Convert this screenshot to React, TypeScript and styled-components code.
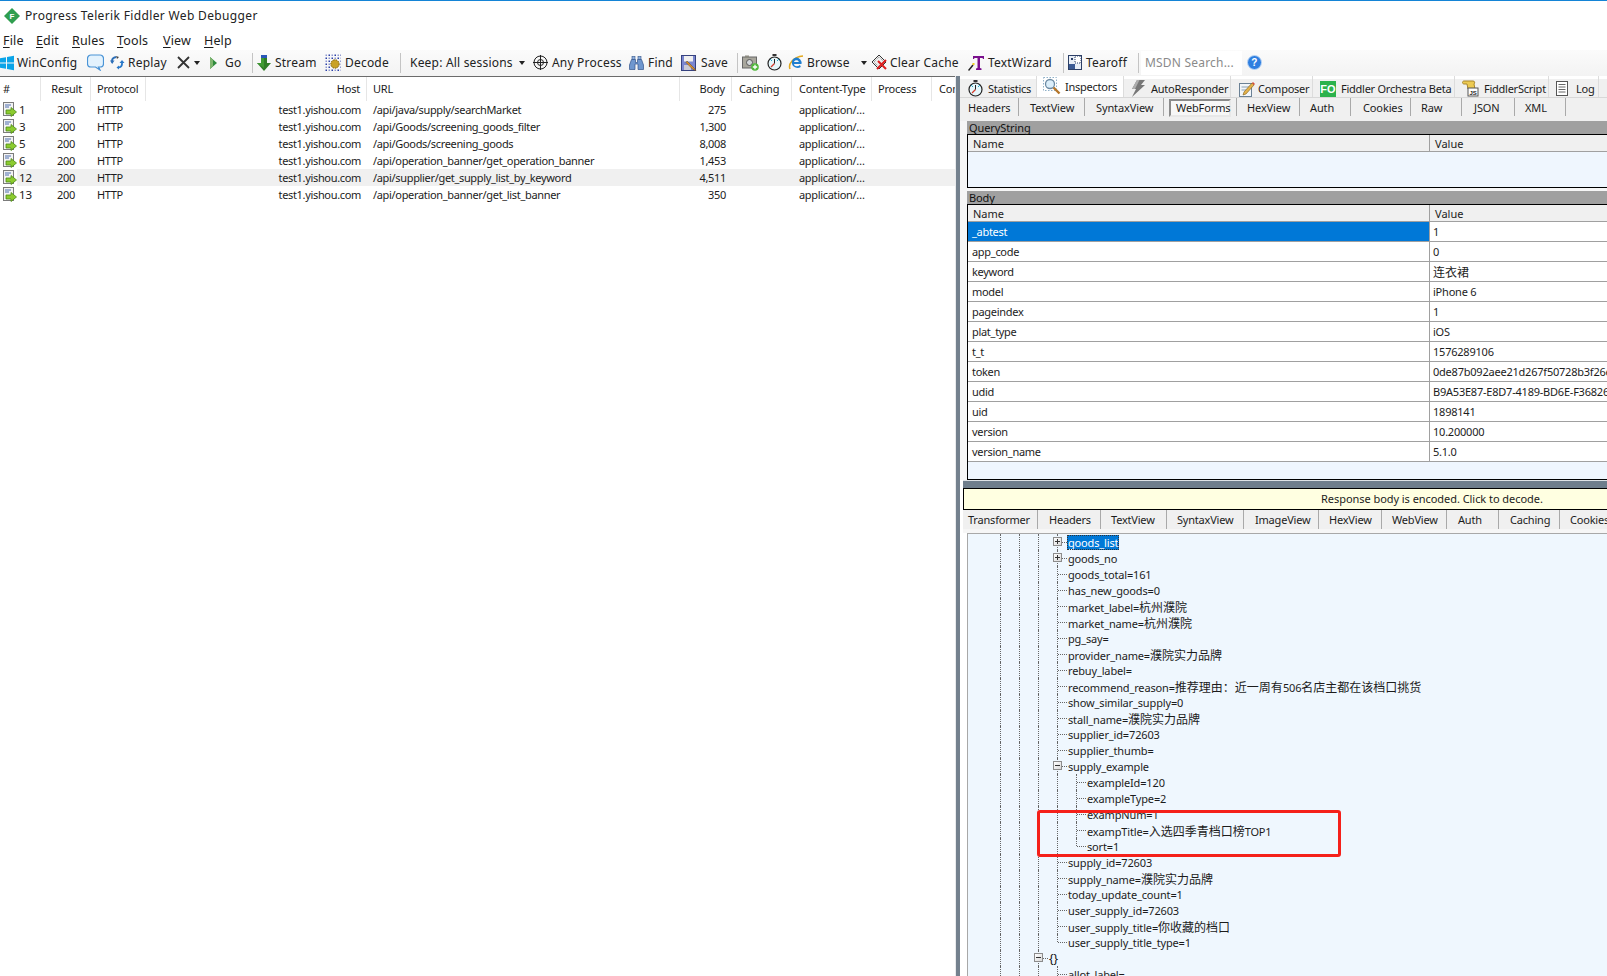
import React from 'react';
import styled, { createGlobalStyle } from 'styled-components';

const Global = createGlobalStyle`
  html, body { margin: 0; padding: 0; background: #fff; }
  body { font-family: "Noto Sans", "Noto Sans CJK SC", sans-serif; color: #1c1c1c; }
`;

const Page = styled.div`
  width: 1607px; height: 976px; overflow: hidden; display: flex; flex-direction: column;
  border-top: 1px solid #1484d6; box-sizing: border-box; background: #fff;
`;
const TitleBar = styled.div`
  height: 29px; flex: none; display: flex; align-items: center; padding: 0 0 0 4px; box-sizing: border-box;
  gap: 5px; font-size: 12px; letter-spacing: .35px; color: #222;
`;
const MenuBar = styled.div`height: 20px; flex: none; display: flex; align-items: center; padding: 1px 0 0 3px; box-sizing: border-box; font-size: 12.5px; letter-spacing: .15px;`;
const MenuItem = styled.span<{ $w: number }>`width: ${p => p.$w}px; flex: none; u { text-decoration: underline; text-underline-offset: 2px; }`;
const Toolbar = styled.div`
  height: 26px; flex: none; display: flex; align-items: center; box-sizing: border-box; padding-bottom: 1px;
  background: linear-gradient(#fbfbfb, #f3f3f3); font-size: 12px; letter-spacing: .2px; color: #222; white-space: nowrap;
`;
const ToolItem = styled.div<{ $w: number; $gap?: number }>`
  width: ${p => p.$w}px; flex: none; display: flex; align-items: center; gap: ${p => p.$gap ?? 4}px; svg { flex: none; }
`;
const ToolSep = styled.div<{ $w: number }>`
  width: ${p => p.$w}px; flex: none; height: 20px; box-sizing: border-box;
  &::before { content: ""; display: block; width: 1px; height: 20px; background: #c4c4c4; }
`;
const Search = styled.div`
  width: 101px; height: 24px; flex: none; background: #fff; color: #8a8a8a; display: flex; align-items: center; padding-left: 4px;
  box-sizing: border-box; margin-right: 5px;
`;
const Main = styled.div`flex: 1; min-height: 0; display: flex;`;

const SessionPane = styled.div`width: 955px; flex: none; overflow: hidden; font-size: 11px; letter-spacing: -.33px; border-top: 1px solid #6b6b6b;`;
const COLS = '41px 50px 55px 221px 313px 52px 60px 80px 60px 23px';
const HeadRow = styled.div`display: grid; grid-template-columns: ${COLS}; height: 24px; box-sizing: border-box; white-space: nowrap; letter-spacing: -.2px;`;
const HeadCell = styled.div<{ $r?: number; $l?: number }>`
  display: flex; align-items: center; justify-content: ${p => (p.$r !== undefined ? 'flex-end' : 'flex-start')};
  padding: 0 ${p => p.$r ?? 0}px 2px ${p => p.$l ?? 0}px; border-right: 1px solid #e6e6e6; box-sizing: border-box; overflow: hidden;
  &:last-child { border-right: 0; }
`;
const Row = styled.div<{ $sel?: boolean }>`
  display: grid; grid-template-columns: ${COLS}; height: 17px; white-space: nowrap;
  background: ${p => (p.$sel ? 'linear-gradient(90deg, #fff 17px, #f0f0f0 17px)' : 'transparent')};
`;
const Cell = styled.div<{ $r?: number; $l?: number }>`
  display: flex; align-items: center; justify-content: ${p => (p.$r !== undefined ? 'flex-end' : 'flex-start')};
  padding: 0 ${p => p.$r ?? 0}px 0 ${p => p.$l ?? 0}px; box-sizing: border-box; overflow: hidden;
`;
const IdCell = styled(Cell)`padding-left: 3px; gap: 2px; font-size: 11.5px; letter-spacing: 0;`;

const Splitter = styled.div`width: 5px; flex: none; background: linear-gradient(90deg, #e9eaec 1px, #74818e 1px);`;
const Inspect = styled.div`flex: 1; min-width: 0; display: flex; flex-direction: column; overflow: hidden;`;
const TopStrip = styled.div`height: 21px; flex: none; display: flex; padding: 0 0 0 1px; font-size: 11px; letter-spacing: -.25px; background: linear-gradient(#fff 3px, #f0f0f0 3px); border-bottom: 1px solid #d8d8d8; white-space: nowrap;`;
const TopTab = styled.div<{ $w: number; $active?: boolean; $pad: number; $gap: number }>`
  width: ${p => p.$w}px; flex: none; display: flex; align-items: center; box-sizing: border-box;
  padding: ${p => (p.$active ? '0 0 1px' : '4px 0 0')} ${p => p.$pad}px; gap: ${p => p.$gap}px;
  padding-right: 0; border-right: 1px solid #dcdcdc; overflow: hidden;
  background: ${p => (p.$active ? '#fff' : 'transparent')};
  svg { flex: none; }
`;
const SubStrip = styled.div<{ $h: number; $ls: number }>`
  height: ${p => p.$h}px; flex: none; display: flex; font-size: 11px; letter-spacing: ${p => p.$ls}px; background: #f0f0f0; white-space: nowrap;
`;
const SubTab = styled.div<{ $w: number; $pad: number; $boxed?: boolean; $h: number }>`
  width: ${p => p.$w}px; height: ${p => p.$h}px; flex: none; display: flex; align-items: center; box-sizing: border-box;
  padding-left: ${p => p.$pad}px; border-right: 1px solid #a9a9a9; position: relative;
  ${p => p.$boxed && `
    &::before { content: ""; position: absolute; left: 5px; right: 5px; top: 1px; bottom: -1px;
      border: 2px solid; border-color: #8a8a8a #e8e8e8 #e8e8e8 #8a8a8a; background: #f7f7f7; }
    & > span { position: relative; }
  `}
`;
const UpperBody = styled.div`flex: none; height: 359px; padding-left: 7px; background: #f6f6f6; font-size: 11px;`;
const GroupHead = styled.div`height: 13px; line-height: 13px; margin-right: -4px; background: #a0a0a0; padding-left: 2px; color: #111; letter-spacing: -.1px;`;
const Frame = styled.div<{ $h: number }>`
  height: ${p => p.$h}px; box-sizing: border-box; border: 1px solid #000; margin-right: -4px; background: #eff6fe; overflow: hidden;
`;
const GridHead = styled.div`display: grid; grid-template-columns: 462px 1fr; height: 16px; background: #f0f0f0; border-bottom: 1px solid #a0a0a0;`;
const HeadName = styled.div`padding-left: 5px; border-right: 1px solid #a0a0a0; line-height: 17px; &:last-child { border-right: 0; }`;
const FormRow = styled.div`display: grid; grid-template-columns: 462px 1fr; height: 20px; box-sizing: border-box; background: #fff; border-bottom: 1px solid #a0a0a0; white-space: nowrap;`;
const NameCell = styled.div<{ $sel?: boolean }>`
  display: flex; align-items: center; padding-left: 4px; border-right: 1px solid #a0a0a0; letter-spacing: -.3px;
  background: ${p => (p.$sel ? '#0078d7' : 'transparent')}; color: ${p => (p.$sel ? '#fff' : 'inherit')};
`;
const ValueCell = styled.div`display: flex; align-items: center; padding-left: 3px; overflow: hidden; letter-spacing: -.22px;`;
const FormGap = styled.div`height: 3px;`;
const HSplit = styled.div`height: 8px; flex: none; background: linear-gradient(#dfe3e6 1px, #6f7e8c 1px); margin-left: 3px;`;
const Lower = styled.div`flex: 1; min-height: 0; display: flex; flex-direction: column; padding-left: 3px; font-size: 11px;`;
const Notice = styled.div`
  height: 22px; flex: none; box-sizing: border-box; border: 1px solid #000; border-right: 0; background: #ffffe1;
  display: flex; align-items: center; padding: 0 0 2px 357px; letter-spacing: -.05px;
`;
const TreeGap = styled.div`height: 4px; flex: none; background: #f6f6f6;`;
const Tree = styled.div`
  flex: 1; min-height: 0; position: relative; margin-left: 4px; border: 1px solid #a8a8a8; border-right: 0; border-bottom: 0;
  background: #eff7fe; padding: 0 0 0 32px; overflow: hidden; white-space: nowrap; letter-spacing: -.15px;
`;
const TreeRow = styled.div`height: 16px; display: flex; align-items: center;`;
const Guide = styled.span`width: 19px; height: 16px; flex: none; box-sizing: border-box; border-left: 1px dotted #666;`;
const Branch = styled.span<{ $last?: boolean }>`
  width: 11px; height: 16px; flex: none; box-sizing: border-box; position: relative;
  &::before { content: ""; position: absolute; left: 0; top: 0; height: ${p => (p.$last ? 8 : 16)}px; border-left: 1px dotted #666; }
  &::after { content: ""; position: absolute; left: 1px; top: 8px; width: 9px; border-top: 1px dotted #666; }
`;
const Expander = styled.span`
  position: absolute; z-index: 1; left: -4px; top: 3px; width: 9px; height: 9px; box-sizing: border-box; border: 1px solid #8c8c8c;
  background: linear-gradient(135deg, #fff, #d9d9d9); display: block;
`;
const ExpBar = styled.span<{ $v?: boolean }>`
  position: absolute; background: #333;
  ${p => (p.$v ? 'left: 3px; top: 1px; width: 1px; height: 5px;' : 'left: 1px; top: 3px; width: 5px; height: 1px;')}
`;
const NodeText = styled.span<{ $sel?: boolean; $brace?: boolean }>`
  ${p => p.$sel && 'background: #0078d7; color: #fff; outline: 1px dotted #333; outline-offset: -1px; padding: 0 1px; margin-left: -1px;'}
  ${p => p.$brace && 'font-size: 12px; color: #111;'}
`;
const Cjk = styled.span`font-family: "Noto Sans CJK SC", sans-serif; font-size: 12px; letter-spacing: 0;`;
const RedBox = styled.div`
  position: absolute; left: 69px; top: 276px; width: 304px; height: 47px; box-sizing: border-box;
  border: 3px solid #f5201a; border-radius: 3px;
`;

const splitCjk = (s: string) =>
  s.split(/([\u3000-\u9fff\uff00-\uffef]+)/).map((t, i) =>
    i % 2 ? <Cjk key={i}>{t}</Cjk> : <React.Fragment key={i}>{t}</React.Fragment>);

/* ---------- icons ---------- */
const Logo = () => (
  <svg width="16" height="16" viewBox="0 0 16 16"><path d="M8 0l8 8-8 8-8-8z" fill="#2f9e4f" /><text x="8" y="11" fontSize="8" fontWeight="700" fontFamily="Liberation Sans" textAnchor="middle" fill="#fff">F</text></svg>
);
const Windows = () => (
  <svg width="14" height="16" viewBox="0 0 14 16"><path d="M0 3.200l6-1v5.300H0zM7 2l7-1.200v6.700H7zM0 8.500h6v5.300l-6-1zM7 8.500h7v6.700L7 14z" fill="#0aa4e8" /></svg>
);
const Bubble = () => (
  <svg width="17" height="17" viewBox="0 0 17 17"><path d="M4 1h9a3.500 3.500 0 013.500 3.500v5A3.500 3.500 0 0113 13h-1.500l1.500 3-4.500-3H4A3.500 3.500 0 01.5 9.500v-5A3.500 3.500 0 014 1z" fill="#e3f2fd" stroke="#4a94d6" strokeWidth="1.200" /></svg>
);
const Replay = () => (
  <svg width="15" height="15" viewBox="0 0 15 15" fill="none"><path d="M2 7.500V6c0-2 1.500-3.500 4-4" stroke="#2d6fb8" strokeWidth="1.800" /><path d="M0 5.500h4.500L2.200 9z" fill="#2d6fb8" /><path d="M6 1l3 1-2 2z" fill="#444" /><path d="M12 7.500V9c0 2-1 3-3 3.500" stroke="#2878c8" strokeWidth="1.800" /><path d="M9.500 8h5L12 5z" fill="#2878c8" /><path d="M9 10.500v4l-2.500-2z" fill="#2878c8" /></svg>
);
const Cross = () => (
  <svg width="13" height="13" viewBox="0 0 13 13"><path d="M1 1l11 11M12 1L1 12" stroke="#333" strokeWidth="1.800" /></svg>
);
const Caret = () => <svg width="6" height="4" viewBox="0 0 6 4"><path d="M0 0h6L3 4z" fill="#222" /></svg>;
const Play = () => (
  <svg width="7" height="12" viewBox="0 0 7 12"><path d="M0 0l7 6-7 6z" fill="#2f8a3c" /><path d="M0 0l3 3v6l-3 3z" fill="#7fb56e" /></svg>
);
const Stream = () => (
  <svg width="14" height="16" viewBox="0 0 14 16"><path d="M4 0h6v3H4z" fill="#2a57b8" /><path d="M4 3h6v5h4l-7 8-7-8h4z" fill="#2f7d26" /><path d="M4 3h3v10L0 8h4z" fill="#3f9b32" /></svg>
);
const Decode = () => {
  const dots: React.ReactNode[] = [];
  for (let y = 0; y < 6; y++) for (let x = 0; x < 6; x++)
    if (!(x > 1 && y > 1 && x < 5 && y < 5)) dots.push(<rect key={`${x}${y}`} x={x * 3 + .5} y={y * 3 + .5} width="1.500" height="1.500" fill={(x + y) % 2 ? '#2a3fa8' : '#8d97cf'} />);
  return <svg width="16" height="17" viewBox="0 0 16 17">{dots}<circle cx="10" cy="10" r="4.200" fill="#c9a227" stroke="#7a5f10" strokeDasharray="1.500 1" /></svg>;
};
const Cross3 = () => (
  <svg width="15" height="15" viewBox="0 0 15 15" fill="none" stroke="#222"><circle cx="7.500" cy="7.500" r="6.500" /><circle cx="7.500" cy="7.500" r="3" /><path d="M0 7.500h15M7.500 0v15" /></svg>
);
const Binoc = () => (
  <svg width="15" height="14" viewBox="0 0 15 14"><rect x="3" y="0.500" width="3" height="3" fill="#8fb0dc" stroke="#33558c" strokeWidth=".6" /><rect x="9" y="0.500" width="3" height="3" fill="#8fb0dc" stroke="#33558c" strokeWidth=".6" /><path d="M2.500 3.500h4v3h2v-3h4l2 5.500v4.500H9V8H6v5.500H.5V9z" fill="#6f97cf" stroke="#33558c" strokeWidth=".7" /></svg>
);
const Save = () => (
  <svg width="16" height="16" viewBox="0 0 16 16"><rect x=".5" y=".5" width="14" height="15" fill="#7a86cf" stroke="#36427f" /><rect x="3" y="1" width="9" height="5.500" fill="#f0f0f0" /><rect x="3" y="10" width="7" height="5" fill="#c9c9d6" /><path d="M6 6l7 7 2 2.500-3-1-7-7z" fill="#d88f2c" stroke="#6a4a18" strokeWidth=".5" /></svg>
);
const Camera = () => (
  <svg width="17" height="17" viewBox="0 0 17 17"><rect x=".5" y="3" width="14" height="11" fill="#a8a69c" stroke="#666" /><rect x="3" y="1.500" width="4" height="2" fill="#8c8a80" /><circle cx="7.500" cy="8.500" r="3" fill="#d3d7da" stroke="#555" /><circle cx="13" cy="13" r="3.800" fill="#4fb83a" /><path d="M13 10.800v4.400M10.800 13h4.400" stroke="#fff" strokeWidth="1.300" /></svg>
);
const Watch = () => (
  <svg width="15" height="17" viewBox="0 0 15 17"><rect x="5.500" y="0" width="4" height="2" fill="#333" /><circle cx="7.500" cy="9.500" r="6.500" fill="#e6f7fb" stroke="#222" strokeWidth="1.200" /><path d="M7.500 9.500L4 13" stroke="#d63a2a" strokeWidth="1.200" /><path d="M7.500 5v4.500" stroke="#222" /><path d="M3 5l2 2M12 5l-2 2" stroke="#2ba6c4" /></svg>
);
const IE = () => (
  <svg width="16" height="16" viewBox="0 0 16 16"><path d="M2 14C0 9 5 2 15 1" stroke="#e2a81e" strokeWidth="1.500" fill="none" /><path d="M8 2.500a5.500 5.500 0 015.500 6.500H6c.2 2.500 3.500 3 6 1L12.800 12a5.800 5.800 0 01-9-4.500A5.500 5.500 0 018 2.500zM6 7h4.800C10.500 4.500 6.500 4.500 6 7z" fill="#1f7fd1" fillRule="evenodd" /></svg>
);
const ClearCache = () => (
  <svg width="17" height="17" viewBox="0 0 17 17"><path d="M1 8l7-7 7 7-7 7z" fill="#eee" stroke="#333" /><path d="M3 8l5-5 5 5-5 5z" fill="none" stroke="#888" strokeDasharray="1 1" /><path d="M7 7l8 8M15 6l-9 9" stroke="#dd1f1f" strokeWidth="2" /></svg>
);
const Wizard = () => (
  <svg width="16" height="16" viewBox="0 0 16 16"><path d="M5 1h11v3h-1l-.5-1H12v10l1.500.5V15H8v-1.500L9.500 13V3H6.500L6 4H5z" fill="#7a0f8c" /><path d="M.5 15.500L5 10" stroke="#222" strokeWidth="1.500" /><rect x="4.500" y="8" width="2" height="2" fill="#f2d01e" /></svg>
);
const Tearoff = () => (
  <svg width="14" height="15" viewBox="0 0 14 15"><rect x=".5" y=".5" width="13" height="14" fill="#e8eef6" stroke="#2c3f66" /><path d="M7 1h6v7H7z" fill="#fff" stroke="#2c3f66" strokeDasharray="1 1" /><path d="M1 9h6v5H1z" fill="#3a5a94" /><path d="M3 3h2v2H3z" fill="#2c3f66" /></svg>
);
const Help = () => (
  <svg width="15" height="15" viewBox="0 0 15 15"><circle cx="7.500" cy="7.500" r="7" fill="#2f7fe0" stroke="#bcd6f5" /><text x="7.500" y="11" fontSize="10" fontWeight="700" fontFamily="Liberation Sans" textAnchor="middle" fill="#fff">?</text></svg>
);
const Magnifier = () => (
  <svg width="18" height="18" viewBox="0 0 18 18"><rect x=".5" y=".5" width="13" height="13" fill="none" stroke="#8fb0c8" strokeDasharray="1.500 1.500" /><circle cx="7" cy="7" r="4.500" fill="#dbeefa" stroke="#6c8aa3" strokeWidth="1.300" /><path d="M10.500 10.500l6 6" stroke="#b5762a" strokeWidth="2.400" /></svg>
);
const Bolt = () => (
  <svg width="15" height="17" viewBox="0 0 15 17"><path d="M6 0h8l-4 5h4L1 17l4-8H1z" fill="#777" /><path d="M6 0h2.500L4 9H1z" fill="#adadad" /></svg>
);
const Composer = () => (
  <svg width="16" height="16" viewBox="0 0 16 16"><rect x=".5" y="2.500" width="12" height="13" fill="#f2f6fa" stroke="#6b8195" /><path d="M2.500 6h8M2.500 9h5" stroke="#8aa0b3" /><path d="M5 11l8-9 2 2-8 9-3 1z" fill="#e4b24a" stroke="#7d5d1a" strokeWidth=".6" /><path d="M13 2l1-1 2 2-1 1z" fill="#d84a3a" /></svg>
);
const FO = styled.span`
  width: 16px; height: 16px; flex: none; background: #2bb24c; color: #fff; font: 700 11px/16px "Liberation Sans", sans-serif; text-align: center; letter-spacing: 0;
`;
const Script = () => (
  <svg width="17" height="17" viewBox="0 0 17 17"><path d="M2 1h9c2 0 2 2 1 3l1 5H6L5 4H2C0 4 0 1 2 1z" fill="#ecca52" stroke="#a8862a" /><rect x="6" y="8" width="10" height="8" fill="#fff" stroke="#555" /><text x="11" y="14.500" fontSize="6" fontWeight="700" fontFamily="Liberation Sans" textAnchor="middle" fill="#222">JS</text></svg>
);
const LogIcon = () => (
  <svg width="12" height="15" viewBox="0 0 12 15"><rect x=".5" y=".5" width="11" height="14" fill="#fff" stroke="#555" /><path d="M2.500 3.500h7M2.500 6h7M2.500 8.500h7M2.500 11h7" stroke="#666" /></svg>
);
const RowIconSvg = styled.svg`flex: none;`;
const RowIcon = () => (
  <RowIconSvg width="14" height="15" viewBox="0 0 14 15"><rect x=".5" y=".5" width="10" height="13" fill="#f3f3f3" stroke="#7c7c7c" /><path d="M2 3h6M2 5h4" stroke="#4f6fb0" /><path d="M3 8h5V5.500L13.500 10 8 14.500V12H3z" fill="#8ccb2f" stroke="#4d8a16" strokeWidth=".8" /></RowIconSvg>
);

/* ---------- data ---------- */
const menus: [string, string, number][] = [['F', 'ile', 33], ['E', 'dit', 36], ['R', 'ules', 45], ['T', 'ools', 46], ['V', 'iew', 41], ['H', 'elp', 40]];
const sessions = [
  ['1', 'test1.yishou.com', '/api/java/supply/searchMarket', '275'],
  ['3', 'test1.yishou.com', '/api/Goods/screening_goods_filter', '1,300'],
  ['5', 'test1.yishou.com', '/api/Goods/screening_goods', '8,008'],
  ['6', 'test1.yishou.com', '/api/operation_banner/get_operation_banner', '1,453'],
  ['12', 'test1.yishou.com', '/api/supplier/get_supply_list_by_keyword', '4,511'],
  ['13', 'test1.yishou.com', '/api/operation_banner/get_list_banner', '350'],
];
const inspectTabs: [string, number, number][] = [['Headers', 59, 8], ['TextView', 66, 11], ['SyntaxView', 79, 11], ['WebForms', 73, 12], ['HexView', 63, 10], ['Auth', 51, 10], ['Cookies', 60, 12], ['Raw', 51, 10], ['JSON', 53, 12], ['XML', 51, 10]];
const respTabs: [string, number, number][] = [['Transformer', 75, 5], ['Headers', 63, 11], ['TextView', 66, 10], ['SyntaxView', 77, 10], ['ImageView', 75, 11], ['HexView', 63, 10], ['WebView', 65, 10], ['Auth', 52, 11], ['Caching', 61, 11], ['Cookies', 60, 10]];
const form: [string, string][] = [
  ['_abtest', '1'], ['app_code', '0'], ['keyword', '连衣裙'], ['model', 'iPhone 6'], ['pageindex', '1'], ['plat_type', 'iOS'],
  ['t_t', '1576289106'], ['token', '0de87b092aee21d267f50728b3f26e'], ['udid', 'B9A53E87-E8D7-4189-BD6E-F36826'], ['uid', '1898141'],
  ['version', '10.200000'], ['version_name', '5.1.0'],
];
type N = { t: string; g?: number; exp?: '+' | '-'; last?: boolean; sel?: boolean; brace?: boolean };
const nodes: N[] = [
  { t: 'goods_list', exp: '+', sel: true }, { t: 'goods_no', exp: '+' }, { t: 'goods_total=161' }, { t: 'has_new_goods=0' },
  { t: 'market_label=杭州濮院' }, { t: 'market_name=杭州濮院' }, { t: 'pg_say=' }, { t: 'provider_name=濮院实力品牌' }, { t: 'rebuy_label=' },
  { t: 'recommend_reason=推荐理由：近一周有506名店主都在该档口挑货' }, { t: 'show_similar_supply=0' }, { t: 'stall_name=濮院实力品牌' },
  { t: 'supplier_id=72603' }, { t: 'supplier_thumb=' }, { t: 'supply_example', exp: '-' },
  { t: 'exampleId=120', g: 4 }, { t: 'exampleType=2', g: 4 }, { t: 'exampNum=1', g: 4 }, { t: 'exampTitle=入选四季青档口榜TOP1', g: 4 }, { t: 'sort=1', g: 4, last: true },
  { t: 'supply_id=72603' }, { t: 'supply_name=濮院实力品牌' }, { t: 'today_update_count=1' }, { t: 'user_supply_id=72603' },
  { t: 'user_supply_title=你收藏的档口' }, { t: 'user_supply_title_type=1', last: true },
  { t: '{}', g: 2, exp: '-', brace: true }, { t: 'allot_label=' },
];

export default function App() {
  return (
    <Page>
      <Global />
      <TitleBar><Logo />Progress Telerik Fiddler Web Debugger</TitleBar>
      <MenuBar>
        {menus.map(([a, b, w]) => <MenuItem key={b} $w={w}><u>{a}</u>{b}</MenuItem>)}
      </MenuBar>
      <Toolbar>
        <ToolItem $w={87} $gap={3}><Windows />WinConfig</ToolItem>
        <ToolItem $w={23}><Bubble /></ToolItem>
        <ToolItem $w={67} $gap={3}><Replay />Replay</ToolItem>
        <ToolItem $w={33}><Cross /><Caret /></ToolItem>
        <ToolItem $w={42} $gap={8}><Play />Go</ToolItem>
        <ToolSep $w={5} />
        <ToolItem $w={68} $gap={4}><Stream />Stream</ToolItem>
        <ToolItem $w={75} $gap={4}><Decode />Decode</ToolItem>
        <ToolSep $w={10} />
        <ToolItem $w={123} $gap={6}>Keep: All sessions<Caret /></ToolItem>
        <ToolItem $w={96}><Cross3 />Any Process</ToolItem>
        <ToolItem $w={52} $gap={4}><Binoc />Find</ToolItem>
        <ToolItem $w={56}><Save />Save</ToolItem>
        <ToolSep $w={5} />
        <ToolItem $w={25}><Camera /></ToolItem>
        <ToolItem $w={21}><Watch /></ToolItem>
        <ToolItem $w={73} $gap={3}><IE />Browse</ToolItem>
        <ToolItem $w={10}><Caret /></ToolItem>
        <ToolItem $w={97} $gap={2}><ClearCache />Clear Cache</ToolItem>
        <ToolItem $w={95}><Wizard />TextWizard</ToolItem>
        <ToolSep $w={5} />
        <ToolItem $w={70}><Tearoff />Tearoff</ToolItem>
        <ToolSep $w={3} />
        <Search>MSDN Search...</Search>
        <Help />
      </Toolbar>
      <Main>
        <SessionPane>
          <HeadRow>
            <HeadCell $l={3}>#</HeadCell><HeadCell $r={8}>Result</HeadCell><HeadCell $l={6}>Protocol</HeadCell>
            <HeadCell $r={6}>Host</HeadCell><HeadCell $l={6}>URL</HeadCell><HeadCell $r={6}>Body</HeadCell>
            <HeadCell $l={7}>Caching</HeadCell><HeadCell $l={7}>Content-Type</HeadCell><HeadCell $l={6}>Process</HeadCell><HeadCell $l={7}>Com</HeadCell>
          </HeadRow>
          {sessions.map(([id, host, url, body]) => (
            <Row key={id} $sel={id === '12'}>
              <IdCell><RowIcon />{id}</IdCell><Cell $r={16}>200</Cell><Cell $l={6}>HTTP</Cell><Cell $r={6}>{host}</Cell>
              <Cell $l={6}>{url}</Cell><Cell $r={6}>{body}</Cell><Cell /><Cell $l={7}>application/…</Cell><Cell /><Cell />
            </Row>
          ))}
        </SessionPane>
        <Splitter />
        <Inspect>
          <TopStrip>
            <TopTab $w={76} $pad={7} $gap={5}><Watch />Statistics</TopTab>
            <TopTab $w={87} $pad={6} $gap={4} $active><Magnifier />Inspectors</TopTab>
            <TopTab $w={107} $pad={7} $gap={5}><Bolt />AutoResponder</TopTab>
            <TopTab $w={82} $pad={8} $gap={3}><Composer />Composer</TopTab>
            <TopTab $w={142} $pad={7} $gap={5}><FO>FO</FO>Fiddler Orchestra Beta</TopTab>
            <TopTab $w={94} $pad={7} $gap={5}><Script />FiddlerScript</TopTab>
            <TopTab $w={50} $pad={7} $gap={8}><LogIcon />Log</TopTab>
          </TopStrip>
          <SubStrip $h={23} $ls={-0.12}>
            {inspectTabs.map(([t, w, pad]) => <SubTab key={t} $w={w} $pad={pad} $h={18} $boxed={t === 'WebForms'}><span>{t}</span></SubTab>)}
          </SubStrip>
          <UpperBody>
            <GroupHead>QueryString</GroupHead>
            <Frame $h={54}>
              <GridHead><HeadName>Name</HeadName><HeadName>Value</HeadName></GridHead>
            </Frame>
            <FormGap />
            <GroupHead>Body</GroupHead>
            <Frame $h={276}>
              <GridHead><HeadName>Name</HeadName><HeadName>Value</HeadName></GridHead>
              {form.map(([k, v], i) => (
                <FormRow key={k}><NameCell $sel={i === 0}>{k}</NameCell><ValueCell>{splitCjk(v)}</ValueCell></FormRow>
              ))}
            </Frame>
          </UpperBody>
          <HSplit />
          <Lower>
            <Notice>Response body is encoded. Click to decode.</Notice>
            <SubStrip $h={19} $ls={-0.2}>
              {respTabs.map(([t, w, pad]) => <SubTab key={t} $w={w} $pad={pad} $h={19}><span>{t}</span></SubTab>)}
            </SubStrip>
            <TreeGap />
            <Tree>
              {nodes.map(n => (
                <TreeRow key={n.t}>
                  {Array.from({ length: n.g ?? 3 }, (_, i) => <Guide key={i} />)}
                  <Branch $last={n.last}>
                    {n.exp && <Expander>{n.exp === '+' && <ExpBar $v />}<ExpBar /></Expander>}
                  </Branch>
                  <NodeText $sel={n.sel} $brace={n.brace}>{splitCjk(n.t)}</NodeText>
                </TreeRow>
              ))}
              <RedBox />
            </Tree>
          </Lower>
        </Inspect>
      </Main>
    </Page>
  );
}
